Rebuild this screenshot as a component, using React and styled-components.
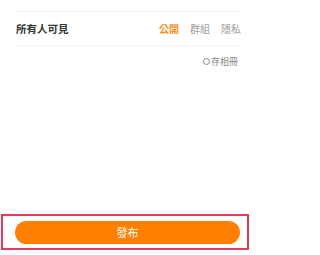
import React from "react";
import styled, { createGlobalStyle } from "styled-components";

const Global = createGlobalStyle`
  html, body {
    margin: 0;
    padding: 0;
    background: #fff;
    font-family: "Noto Sans CJK TC", "Noto Sans", sans-serif;
  }
`;

const Page = styled.div`
  width: 255px;
  height: 255px;
  display: flex;
  flex-direction: column;
  background: #fff;
`;

const Section = styled.div`
  padding: 11px 14px 0 16px;
`;

const Row = styled.div`
  height: 33px;
  display: flex;
  align-items: center;
  justify-content: space-between;
  border-top: 1px solid #f3f3f3;
  border-bottom: 1px solid #f3f3f3;
`;

const Label = styled.span`
  font-size: 10.5px;
  font-weight: 700;
  color: #333;
`;

const Tabs = styled.div`
  display: flex;
  gap: 11px;
`;

const Tab = styled.span`
  font-size: 10px;
  color: ${p => (p.$active ? "#ff8a1f" : "#a0a0a0")};
  font-weight: ${p => (p.$active ? 700 : 400)};
`;

const Save = styled.div`
  display: flex;
  justify-content: flex-end;
  align-items: center;
  gap: 1px;
  margin-top: 9px;
  padding-right: 3px;
  font-size: 9px;
  color: #888;
`;

const Circle = styled.span`
  width: 5px;
  height: 5px;
  border: 1px solid #888;
  border-radius: 50%;
`;

const Spacer = styled.div`
  flex: 1;
`;

const Footer = styled.div`
  margin: 0 6px 5px 1px;
  height: 32px;
  border: 2px solid #e8385c;
  display: flex;
  align-items: center;
  padding: 0 7px 0 12px;
`;

const Button = styled.button`
  flex: 1;
  height: 23px;
  border: none;
  border-radius: 12px;
  background: #ff8000;
  color: #fff;
  font-family: inherit;
  font-size: 11px;
  padding: 0;
`;

export default function App() {
  return (
    <Page>
      <Global />
      <Section>
        <Row>
          <Label>所有人可見</Label>
          <Tabs>
            <Tab $active>公開</Tab>
            <Tab>群組</Tab>
            <Tab>隱私</Tab>
          </Tabs>
        </Row>
        <Save>
          <Circle />
          存相冊
        </Save>
      </Section>
      <Spacer />
      <Footer>
        <Button>發布</Button>
      </Footer>
    </Page>
  );
}
